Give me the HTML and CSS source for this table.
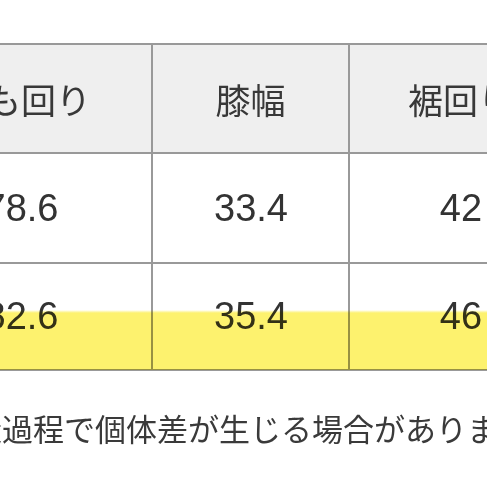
FILE: index.html
```html
<!DOCTYPE html>
<html lang="ja">
<head>
<meta charset="utf-8">
<link rel="stylesheet" href="styles.css">
</head>
<body>
<div class="page">
  <div class="table">
    <div class="cell head">もも回り</div>
    <div class="cell head">膝幅</div>
    <div class="cell head">裾回り</div>
    <div class="cell num r1">78.6</div>
    <div class="cell num r1">33.4</div>
    <div class="cell num r1">42</div>
    <div class="cell num r2">82.6</div>
    <div class="cell num r2">35.4</div>
    <div class="cell num r2">46</div>
    <div class="marker"></div>
  </div>
  <p class="note">※製造過程で個体差が生じる場合があります。</p>
</div>
</body>
</html>
```

FILE: styles.css
```css
html, body {
  margin: 0;
  padding: 0;
  background: #ffffff;
  overflow: hidden;
}
.page {
  width: 487px;
  height: 487px;
  overflow: hidden;
  font-family: "Liberation Sans", "Noto Sans CJK JP", sans-serif;
  color: #333333;
}
.table {
  position: relative;
  margin: 43px 0 0 -109px;
  width: 682px;
  display: grid;
  grid-template-columns: 262px 197px 223px;
  grid-template-rows: 109px 110px 107px;
  border-top: 2px solid #999999;
}
.cell {
  box-sizing: border-box;
  display: flex;
  align-items: center;
  justify-content: center;
  border-right: 2px solid #999999;
  border-bottom: 2px solid #999999;
  background: #ffffff;
}
.head {
  background: #efefef;
  font-size: 35px;
  color: #383838;
}
.num {
  font-size: 38px;
  padding-left: 1px;
}
.marker {
  position: absolute;
  left: 109px;
  right: 0;
  top: 265px;
  height: 60px;
  background: linear-gradient(to bottom, rgba(255, 243, 105, 0) 0px, #fdf26e 3px, #fdf26e 100%);
  mix-blend-mode: multiply;
  pointer-events: none;
}
.note {
  margin: 34px 0 0 -91px;
  font-family: "Noto Sans CJK JP", sans-serif;
  font-size: 31px;
  line-height: 46px;
  white-space: nowrap;
  color: #3a3a3a;
}
```
